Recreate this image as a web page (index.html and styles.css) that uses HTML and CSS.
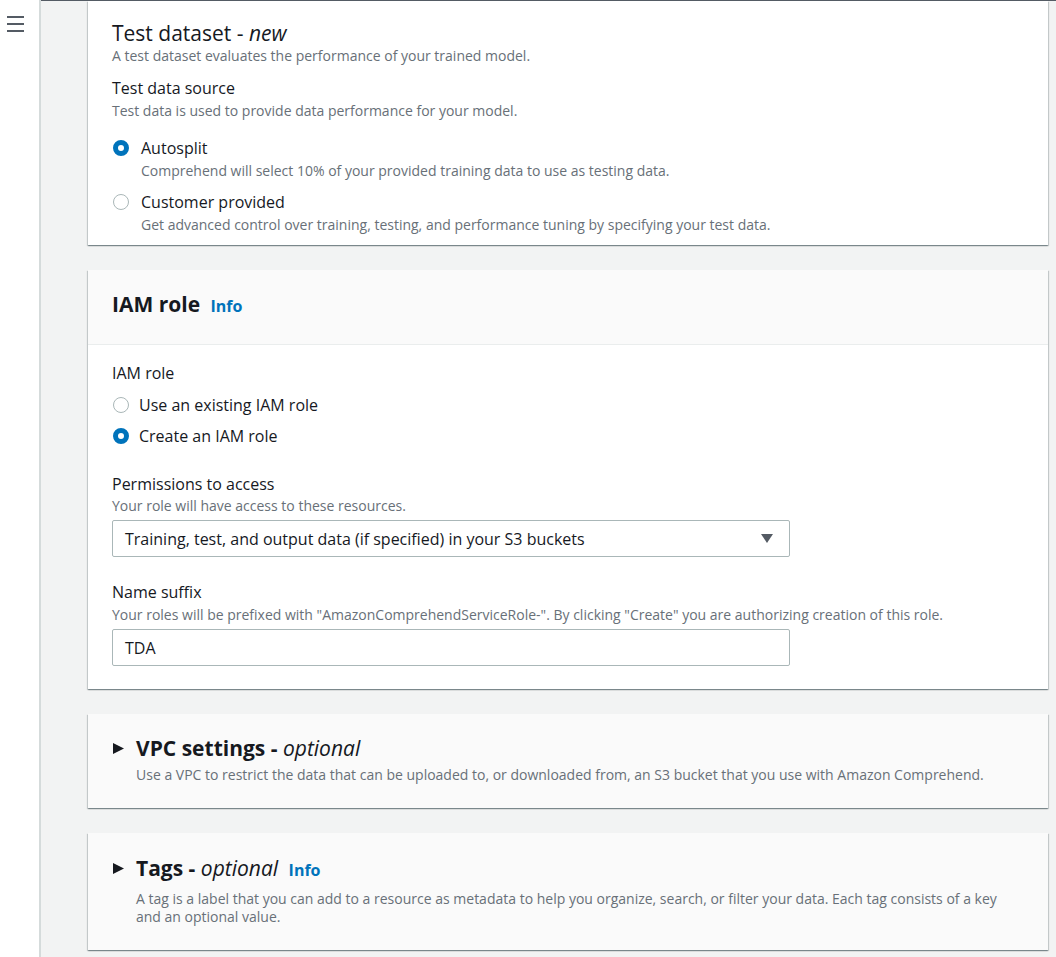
FILE: index.html
```html
<!DOCTYPE html>
<html lang="en">
<head>
<meta charset="utf-8">
<title>Create classifier</title>
<link rel="stylesheet" href="styles.css">
</head>
<body>
<div class="layout">
  <aside class="sidebar">
    <button class="menu-btn" aria-label="Open navigation">
      <svg width="17" height="16" viewBox="0 0 17 16"><rect x="0" y="0" width="17" height="2" fill="#545b64"/><rect x="0" y="7" width="17" height="2" fill="#545b64"/><rect x="0" y="14" width="17" height="2" fill="#545b64"/></svg>
    </button>
  </aside>
  <main class="content">
    <section class="card card-top">
      <div class="card-body">
        <h2 class="section-title">Test dataset - <em>new</em></h2>
        <p class="desc">A test dataset evaluates the performance of your trained model.</p>
        <div class="field">
          <div class="label">Test data source</div>
          <p class="desc">Test data is used to provide data performance for your model.</p>
          <div class="radio-group wide">
            <label class="radio">
              <span class="dot checked"></span>
              <span class="radio-text">
                <span class="radio-label">Autosplit</span>
                <span class="desc">Comprehend will select 10% of your provided training data to use as testing data.</span>
              </span>
            </label>
            <label class="radio">
              <span class="dot"></span>
              <span class="radio-text">
                <span class="radio-label">Customer provided</span>
                <span class="desc">Get advanced control over training, testing, and performance tuning by specifying your test data.</span>
              </span>
            </label>
          </div>
        </div>
      </div>
    </section>

    <section class="card">
      <div class="card-header">
        <h2 class="header-title">IAM role <a class="info" href="#">Info</a></h2>
      </div>
      <div class="card-body body-iam">
        <div class="label">IAM role</div>
        <div class="radio-group compact">
          <label class="radio">
            <span class="dot"></span>
            <span class="radio-label">Use an existing IAM role</span>
          </label>
          <label class="radio">
            <span class="dot checked"></span>
            <span class="radio-label">Create an IAM role</span>
          </label>
        </div>
        <div class="field field-perm">
          <div class="label">Permissions to access</div>
          <p class="desc">Your role will have access to these resources.</p>
          <div class="select">
            <span>Training, test, and output data (if specified) in your S3 buckets</span>
            <svg width="12" height="9" viewBox="0 0 12 9"><path d="M0 0 L12 0 L6 9 Z" fill="#545b64"/></svg>
          </div>
        </div>
        <div class="field field-name">
          <div class="label">Name suffix</div>
          <p class="desc">Your roles will be prefixed with "AmazonComprehendServiceRole-". By clicking "Create" you are authorizing creation of this role.</p>
          <div class="input">TDA</div>
        </div>
      </div>
    </section>

    <section class="card card-collapsed">
      <div class="expander">
        <svg class="caret" width="11" height="11" viewBox="0 0 11 11"><path d="M0 0 L11 5.5 L0 11 Z" fill="#16191f"/></svg>
        <div>
          <h2 class="header-title">VPC settings - <em>optional</em></h2>
          <p class="desc">Use a VPC to restrict the data that can be uploaded to, or downloaded from, an S3 bucket that you use with Amazon Comprehend.</p>
        </div>
      </div>
    </section>

    <section class="card card-collapsed card-tags">
      <div class="expander">
        <svg class="caret" width="11" height="11" viewBox="0 0 11 11"><path d="M0 0 L11 5.5 L0 11 Z" fill="#16191f"/></svg>
        <div>
          <h2 class="header-title">Tags - <em>optional</em> <a class="info" href="#">Info</a></h2>
          <p class="desc">A tag is a label that you can add to a resource as metadata to help you organize, search, or filter your data. Each tag consists of a key and an optional value.</p>
        </div>
      </div>
    </section>
  </main>
</div>
</body>
</html>
```

FILE: styles.css
```css
* { box-sizing: border-box; }
html, body { margin: 0; padding: 0; }
body {
  font-family: "Open Sans", "Noto Sans", sans-serif;
  color: #16191f;
  background: #f2f3f3;
  height: 957px;
  overflow: hidden;
}
.layout { display: flex; min-height: 957px; }
.sidebar {
  width: 41px;
  flex: none;
  background: #ffffff;
  border-right: 2px solid #d5dbdb;
  padding: 16px 0 0 7px;
}
.menu-btn {
  display: block;
  border: 0; background: none; padding: 0; width: 17px; height: 16px;
  cursor: pointer;
}
.menu-btn svg { display: block; }
.content {
  flex: 1;
  border-top: 1px solid #545b64;
  padding: 0 8px 0 47px;
  display: flex;
  flex-direction: column;
  gap: 25px;
}
.card {
  background: #ffffff;
  box-shadow: 0 1px 1px 0 rgba(0,28,36,.3), 1px 1px 1px 0 rgba(0,28,36,.15), -1px 1px 1px 0 rgba(0,28,36,.15);
}
.card-body { padding: 20px 24px; }
.card-top .card-body { padding-top: 19px; padding-bottom: 10px; }
.section-title {
  margin: 0;
  font-size: 21px;
  font-weight: 400;
  line-height: 26px;
}
.section-title em, .header-title em { font-style: italic; font-weight: 400; }
p { margin: 0; }
.desc {
  display: block;
  font-size: 14px;
  line-height: 20px;
  color: #687078;
}
.label {
  font-size: 16px;
  line-height: 22px;
}
.field { margin-top: 11px; }
.field > .desc { margin-top: 2px; }
.field-perm > .desc { margin-top: 1px; }
.radio-group { display: flex; flex-direction: column; }
.radio-group.wide { gap: 10px; margin-top: 16px; }
.radio-group.compact { gap: 9px; margin-top: 10px; }
.radio { display: flex; align-items: flex-start; gap: 12px; cursor: pointer; }
.radio-group.compact .radio { gap: 10px; }
.dot {
  width: 16px; height: 16px; border-radius: 50%;
  border: 1.5px solid #aab7b8;
  background: #fff;
  flex: none;
  margin-top: 3px;
  margin-left: 1px;
}
.dot.checked { border: 5px solid #0073bb; }
.radio-text { display: flex; flex-direction: column; }
.radio-text .desc { margin-top: 2px; }
.radio-label { font-size: 16px; line-height: 22px; }

.card-header {
  background: #fafafa;
  border-bottom: 1px solid #eaeded;
  padding: 18px 24px 22px 24px;
}
.header-title {
  margin: 0;
  font-size: 21px;
  font-weight: 700;
  line-height: 32px;
}
.info {
  color: #0073bb;
  text-decoration: none;
  font-size: 16px;
  font-weight: 700;
  margin-left: 5px;
}
.body-iam { padding-top: 17px; padding-bottom: 23px; }
.field-perm { margin-top: 26px; }
.field-name { margin-top: 24px; }
.select, .input {
  width: 678px;
  height: 37px;
  border: 1px solid #aab7b8;
  border-radius: 2px;
  background: #fff;
  margin-top: 4px;
  padding: 0 16px 0 12px;
  font-size: 16px;
  display: flex;
  align-items: center;
  justify-content: space-between;
}
.select svg { flex: none; }
.card-collapsed { background: #fafafa; }
.expander {
  display: flex;
  align-items: flex-start;
  gap: 12px;
  padding: 20px 30px 24px 25px;
}
.caret { margin-top: 9px; flex: none; }
.expander .header-title { line-height: 28px; }
.expander .desc { margin-top: 4px; line-height: 18px; }
.card-tags .expander { padding-top: 21px; padding-bottom: 24px; }
.card-tags .desc { margin-top: 6px; }
```
